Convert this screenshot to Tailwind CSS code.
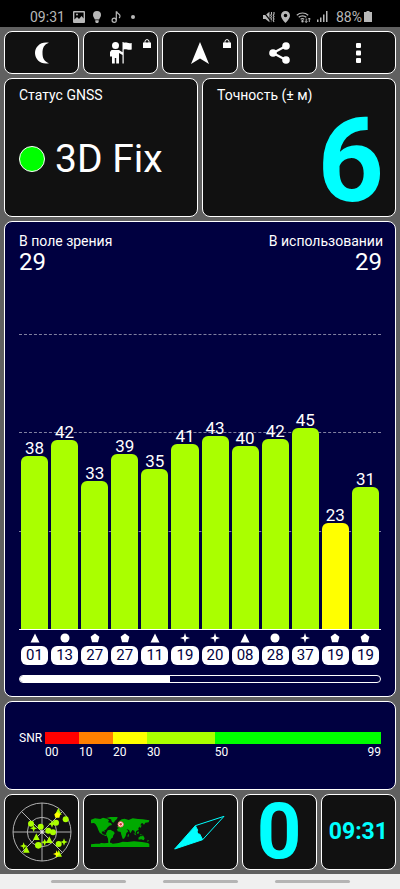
<!DOCTYPE html>
<html lang="ru">
<head>
    <meta charset="UTF-8">
    <meta name="viewport" content="width=device-width, initial-scale=1.0">
    <title>Статус GNSS</title>
    <script src="https://cdn.jsdelivr.net/npm/@tailwindcss/browser@4"></script>
</head>
<body class="bg-[#606060] text-white font-[Roboto,sans-serif]">
<div class="min-h-screen flex flex-col">

    <!-- Status bar -->
    <header class="h-[27px] shrink-0 bg-black text-[#b8b8b8] flex items-center justify-between pl-[30px] pr-[28px] pt-[6px]">
        <div class="flex items-center gap-2">
            <span class="text-sm leading-4">09:31</span>
            <svg class="w-3 h-3" viewBox="0 0 12 12" fill="currentColor"><path fill-rule="evenodd" d="M1 0h10a1 1 0 0 1 1 1v10a1 1 0 0 1-1 1H1a1 1 0 0 1-1-1V1a1 1 0 0 1 1-1zm.4 1.400v7.200l2.600-2.600 2 2 2.600-3 2 2.400V1.400z"/><circle cx="4" cy="3.500" r="1"/></svg>
            <svg class="w-2 h-3" viewBox="0 0 8 12" fill="currentColor"><path d="M4 0a4 4 0 0 1 4 4c0 2-1.200 2.800-1.800 4.500H1.800C1.200 6.800 0 6 0 4a4 4 0 0 1 4-4zM2.300 9.200h3.400V11l-.7 1H3l-.7-1z"/></svg>
            <svg class="w-3 h-3 ml-[2px]" viewBox="0 0 12 12" fill="none" stroke="currentColor" stroke-width="1.200"><circle cx="3.200" cy="9.200" r="2.100"/><path d="M5.300 9.200V.8h.5c.5 2 3.200 2.200 3.200 4.200 0 1-.5 1.700-1 2"/></svg>
            <span class="w-1 h-1 rounded-full bg-current"></span>
        </div>
        <div class="flex items-center gap-[6px]">
            <svg class="w-3 h-3" viewBox="0 0 12 12" fill="currentColor"><path d="M0 4h2.500L6.500.8v10.400L2.500 8H0z"/><path d="M8.500 1v2l-.8 1.200.8 1.300-.8 1.300.8 1.200-.8 1.300.8 1.700M11 1v2l-.8 1.200.8 1.300-.8 1.300.8 1.200-.8 1.300.8 1.700" fill="none" stroke="currentColor" stroke-width="1.100"/><path d="M.5.800l8 10" stroke="#000" stroke-width="1.200"/></svg>
            <svg class="w-[9px] h-3" viewBox="0 0 9 12" fill="currentColor"><path fill-rule="evenodd" d="M4.500 0A4.500 4.500 0 0 1 9 4.500C9 7.500 4.500 12 4.500 12S0 7.500 0 4.500A4.500 4.500 0 0 1 4.500 0zm0 2.700a1.800 1.800 0 1 0 0 3.600 1.800 1.800 0 0 0 0-3.600z"/></svg>
            <svg class="w-[15px] h-3" viewBox="0 0 15 12" fill="none" stroke="currentColor" stroke-width="1.200"><path d="M.8 4.200a8.500 8.500 0 0 1 11.400 0M2.700 6.300a5.500 5.500 0 0 1 7.600 0M4.600 8.300a3 3 0 0 1 3.600 0"/><circle cx="6.500" cy="10.300" r=".6" fill="currentColor"/><path d="M10.200 7.500v4M9 10.200l1.200 1.300 1.200-1.300M13.300 11V7M12.200 8.300L13.300 7l1.200 1.300" stroke-width="1"/></svg>
            <svg class="w-[11px] h-[11px]" viewBox="0 0 11 11" fill="currentColor"><path d="M0 8.500h1.500V11H0zM3 6.500h1.500V11H3zM6 3.500h1.500V11H6zM9 0h1.500v11H9z"/></svg>
            <span class="flex items-center gap-[2px] ml-[2px]">
                <span class="text-sm leading-4">88%</span>
                <svg class="w-2 h-[11px]" viewBox="0 0 8 11" fill="currentColor"><path d="M2.500 0h3v1H8v10H0V1h2.500z"/></svg>
            </span>
        </div>
    </header>

    <main class="flex-1 flex flex-col gap-1 p-1">

        <!-- Toolbar -->
        <nav class="grid grid-cols-5 gap-1 h-[43px]">
            <button type="button" aria-label="Ночной режим" class="flex items-center justify-center bg-[#111111] border border-white rounded-lg">
                <svg class="w-[14px] h-[22px]" viewBox="0 0 14 22" fill="currentColor"><path d="M14 .8C9 2.500 7.500 6 7.500 11S9 19.500 14 21.200C6 23 0 17.500 0 11S6-1 14 .8z"/></svg>
            </button>
            <button type="button" aria-label="Экскурсия" class="relative flex items-center justify-center bg-[#111111] border border-white rounded-lg">
                <svg class="w-[22px] h-[22px]" viewBox="0 0 22 22" fill="currentColor"><circle cx="5.500" cy="3.500" r="3.500"/><path d="M1.500 8h7.500l3.500 2.300V0h1.200v1c2.500-1.300 4.500 1.200 8 0v6.500c-3.500 1.200-5.500-1-8 0V21.500h-1.200V13L9 11v10.500H6.200V16H4.800v5.500H2V14.500H0V10z"/></svg>
                <svg class="absolute top-[7px] right-[6px] w-2 h-[9px]" viewBox="0 0 8 9" fill="currentColor"><path d="M0 3.500h8V9H0z"/><path d="M2 4V2.600a2 2 0 0 1 4 0V4" fill="none" stroke="currentColor"/></svg>
            </button>
            <button type="button" aria-label="Навигация" class="relative flex items-center justify-center bg-[#111111] border border-white rounded-lg">
                <svg class="w-[18px] h-[22px]" viewBox="0 0 18 22" fill="currentColor"><path d="M9 0l9 22-9-5.500L0 22z"/></svg>
                <svg class="absolute top-[7px] right-[6px] w-2 h-[9px]" viewBox="0 0 8 9" fill="currentColor"><path d="M0 3.500h8V9H0z"/><path d="M2 4V2.600a2 2 0 0 1 4 0V4" fill="none" stroke="currentColor"/></svg>
            </button>
            <button type="button" aria-label="Поделиться" class="flex items-center justify-center bg-[#111111] border border-white rounded-lg">
                <svg class="w-[21px] h-[22px]" viewBox="0 0 21 22" fill="currentColor"><circle cx="4" cy="11" r="3.800"/><circle cx="17" cy="4" r="3.800"/><circle cx="17" cy="18" r="3.800"/><path d="M17 4L4 11l13 7" fill="none" stroke="currentColor" stroke-width="2.200"/></svg>
            </button>
            <button type="button" aria-label="Меню" class="flex items-center justify-center bg-[#111111] border border-white rounded-lg">
                <svg class="w-[5px] h-5" viewBox="0 0 5 20" fill="currentColor"><rect width="5" height="5" rx="1"/><rect y="7.500" width="5" height="5" rx="1"/><rect y="15" width="5" height="5" rx="1"/></svg>
            </button>
        </nav>

        <!-- Fix status and accuracy -->
        <div class="grid grid-cols-2 gap-1 h-[139px]">
            <section class="bg-[#111111] border border-white rounded-lg px-[14px] pt-[6px] flex flex-col">
                <h2 class="text-sm leading-5">Статус GNSS</h2>
                <div class="flex-1 flex items-center gap-[10px] pb-1">
                    <span class="w-[26px] h-[26px] rounded-full bg-[#00ff00] border border-white"></span>
                    <span class="text-[39px] leading-[48px]">3D Fix</span>
                </div>
            </section>
            <section class="bg-[#111111] border border-white rounded-lg px-[14px] pt-[6px] flex flex-col">
                <h2 class="text-sm leading-5">Точность (± м)</h2>
                <div class="flex-1 flex items-center justify-end -mr-[3px]">
                    <span class="text-[116px] leading-[104px] font-bold text-[#00ffff]">6</span>
                </div>
            </section>
        </div>

        <!-- Satellites -->
        <section class="flex-1 flex flex-col bg-[#000040] border border-white rounded-lg px-[14px] pt-[9px] pb-[13px]">
            <div class="flex justify-between">
                <div>
                    <h2 class="text-sm leading-5">В поле зрения</h2>
                    <p class="text-2xl leading-[22px]">29</p>
                </div>
                <div class="text-right -mr-[2px]">
                    <h2 class="text-sm leading-5">В использовании</h2>
                    <p class="text-2xl leading-[22px] pr-px">29</p>
                </div>
            </div>

            <div class="relative mt-auto h-[296px] border-b border-white">
                <div class="absolute inset-0 flex flex-col">
                    <div class="flex-1 border-t border-dashed border-white/50"></div>
                    <div class="flex-1 border-t border-dashed border-white/50"></div>
                    <div class="flex-1 border-t border-dashed border-white/50"></div>
                </div>
                <div id="bars" class="relative h-full grid grid-cols-12 gap-[3px] px-[2px] items-end"></div>
            </div>
            <div id="sats" class="grid grid-cols-12 gap-[3px] px-[2px] mt-[3px]"></div>

            <div class="mt-[10px] h-2 rounded-full border border-white overflow-hidden">
                <div class="h-full w-5/12 bg-white"></div>
            </div>
        </section>

        <!-- SNR scale -->
        <section class="h-[89px] bg-[#000040] border border-white rounded-lg px-[14px] pt-[30px] flex gap-[3px] text-xs leading-3">
            <span>SNR</span>
            <div class="flex-1">
                <div class="h-3 grid grid-cols-[10fr_10fr_10fr_20fr_49fr]">
                    <span class="bg-[#ff0000]"></span>
                    <span class="bg-[#ff8000]"></span>
                    <span class="bg-[#ffff00]"></span>
                    <span class="bg-[#aaff00]"></span>
                    <span class="bg-[#00ff00]"></span>
                </div>
                <div class="mt-[2px] grid grid-cols-[10fr_10fr_10fr_20fr_49fr]">
                    <span>00</span>
                    <span>10</span>
                    <span>20</span>
                    <span>30</span>
                    <span class="flex justify-between"><span>50</span><span>99</span></span>
                </div>
            </div>
        </section>

        <!-- Page tabs -->
        <nav class="grid grid-cols-5 gap-1 h-[76px]">
            <button type="button" aria-label="Спутники" class="flex items-center justify-center bg-[#111111] border border-white rounded-lg">
                <svg class="w-[60px] h-[60px]" viewBox="0 0 180 180">
                    <g fill="none" stroke="#b0b0b0" stroke-width="3">
                        <circle cx="90" cy="90" r="87"/><circle cx="90" cy="90" r="44"/>
                        <path d="M90 3v174M3 90h174M28 28l124 124M152 28L28 152"/>
                    </g>
                    <circle cx="90" cy="90" r="5" fill="#dddddd"/>
                    <g fill="#aaff00">
                        <circle cx="57" cy="65" r="9"/><circle cx="86" cy="74" r="9"/><circle cx="109" cy="86" r="9"/><circle cx="123" cy="91" r="9"/><circle cx="132" cy="62" r="9"/><circle cx="161" cy="52" r="9"/><circle cx="140" cy="126" r="9"/><circle cx="79" cy="130" r="10"/>
                        <path d="M139 18l10 20h-20zM73 94l10 20H63zM112 103l10 20h-20zM43 132l10 20H33zM140 144l10 20h-20z"/>
                        <path d="M65 68l3 8 8 3-8 3-3 8-3-8-8-3 8-3zM120 55l3 8 8 3-8 3-3 8-3-8-8-3 8-3zM98 110l3 8 8 3-8 3-3 8-3-8-8-3 8-3zM156 109l3 8 8 3-8 3-3 8-3-8-8-3 8-3zM35 121l3 8 8 3-8 3-3 8-3-8-8-3 8-3z"/>
                    </g>
                    <path d="M136 30l9 7-3 10h-12l-3-10z" fill="#ffff00"/>
                    <path d="M134 145l3 8 8 3-8 3-3 8-3-8-8-3 8-3z" fill="#ffff00"/>
                </svg>
            </button>
            <button type="button" aria-label="Карта" class="flex items-center justify-center bg-[#111111] border border-white rounded-lg">
                <svg class="w-[59px] h-[30px]" viewBox="0 0 177 90">
                    <g fill="#00aa00">
                        <path d="M0 8l12-4 16 2 8-4 12 3 6 5-3 6 9 2 3 6-8 2-6 6-4 6-5 1 2 6-4-2-6 1 1 5 6 4 5 0 4 4-4 0-9-4-9-6-4-8-3-8-5-9-5-4-9 1z"/>
                        <path d="M46 3l12-3h22l-2 6-6 5-4 6-5-2-3-8z"/>
                        <path d="M50 40l8-2 11 6 2 5-4 6-2 7-5 3-3 8v8l-5-3-1-13-4-9-2-6z"/>
                        <path d="M80 19l4-6 8-6 9-2 12 4 12-5 16 2 14 1 20 3-2 6-10 1-4 6-5-5-4 2-2 8-6 5 1 6-6 2-3 5 2 6-4-4-2-7-6-2-6 10-4-10-8-3 4 5-7 5-4-7-5-5-10-1-6-3 4-5z"/>
                        <path d="M84 32l10-2 8 3 5 5 5 5-6 5-2 9-5 8-4 0-4-12-2-8-9-2-2-6z"/>
                        <path d="M127 47l5 3 5 5-5-1zM138 46l5-3 1 6-5 2zM146 51l9 3-6 1zM142 62l7-5 4 1 3-3 5 9-3 6-7-3-8 1zM170 68l4 3-5 4zM112 51l2 2-2 7-3-2zM149 24l3 2-4 7-2-2z"/>
                        <path d="M0 90v-8l14-2 12 0 4-2 10 1 8-1 12-1 5 3 18-2 12-4 14 1 20-2 24 2 18 3 4 3v9z"/>
                    </g>
                    <circle cx="89" cy="22" r="8" fill="#ffffff" stroke="#ff6666" stroke-width="3"/>
                    <circle cx="89" cy="22" r="4" fill="#dd3333"/>
                </svg>
            </button>
            <button type="button" aria-label="Компас" class="flex items-center justify-center bg-[#111111] border border-white rounded-lg">
                <svg class="w-[51px] h-[35px]" viewBox="0 0 153 105" stroke="#00ffff" stroke-width="3" stroke-linejoin="round"><path d="M2 102l62-70 22 42z" fill="#00ffff"/><path d="M64 32l86-28-64 70" fill="none"/><circle cx="77" cy="50" r="6" fill="#111111" stroke="none"/></svg>
            </button>
            <button type="button" aria-label="Скорость" class="flex items-center justify-center bg-[#111111] border border-white rounded-lg text-[78px] leading-[72px] font-bold text-[#00ffff]">0</button>
            <button type="button" aria-label="Время" class="flex items-center justify-center bg-[#111111] border border-white rounded-lg text-[23px] leading-6 font-bold text-[#00ffff]">09:31</button>
        </nav>
    </main>

    <!-- System navigation -->
    <footer class="h-[15px] shrink-0 bg-[#f0f0f0] flex justify-center items-center gap-[37px] pb-px">
        <span class="w-[75px] h-[3px] rounded-full bg-[#b4b4b4]"></span>
        <span class="w-[75px] h-[3px] rounded-full bg-[#b4b4b4]"></span>
        <span class="w-[75px] h-[3px] rounded-full bg-[#b4b4b4]"></span>
    </footer>
</div>

<script>
    // h is the bar height in pixels
    const satellites = [
        { id: '01', snr: 38, h: 173, type: 'triangle' },
        { id: '13', snr: 42, h: 189, type: 'circle' },
        { id: '27', snr: 33, h: 148, type: 'pentagon' },
        { id: '27', snr: 39, h: 175, type: 'pentagon' },
        { id: '11', snr: 35, h: 160, type: 'triangle' },
        { id: '19', snr: 41, h: 185, type: 'star' },
        { id: '20', snr: 43, h: 193, type: 'star' },
        { id: '08', snr: 40, h: 183, type: 'triangle' },
        { id: '28', snr: 42, h: 190, type: 'circle' },
        { id: '37', snr: 45, h: 201, type: 'star' },
        { id: '19', snr: 23, h: 106, type: 'pentagon' },
        { id: '19', snr: 31, h: 142, type: 'pentagon' }
    ];

    const shapes = {
        triangle: '<path d="M5 .5L9.500 9.500h-9z"/>',
        circle: '<circle cx="5" cy="5" r="4.500"/>',
        pentagon: '<path d="M5 .5l4.400 3.300-1.500 5.400H2.100L.6 3.800z"/>',
        star: '<path d="M5 0l1.200 3.800L10 5 6.200 6.200 5 10 3.800 6.200 0 5l3.800-1.200z"/>'
    };

    document.getElementById('bars').innerHTML = satellites.map(s => `
        <div class="text-center">
            <div class="text-[17px] leading-4">${s.snr}</div>
            <div class="rounded-t-md ${s.snr < 30 ? 'bg-[#ffff00]' : 'bg-[#aaff00]'}" style="height:${s.h}px"></div>
        </div>`).join('');

    document.getElementById('sats').innerHTML = satellites.map(s => `
        <div class="flex flex-col items-center gap-[3px]">
            <svg class="w-[10px] h-[10px]" viewBox="0 0 10 10" fill="currentColor">${shapes[s.type]}</svg>
            <span class="w-full h-[19px] rounded-md bg-white text-[#000040] text-[15px] leading-[19px] text-center">${s.id}</span>
        </div>`).join('');
</script>
</body>
</html>
